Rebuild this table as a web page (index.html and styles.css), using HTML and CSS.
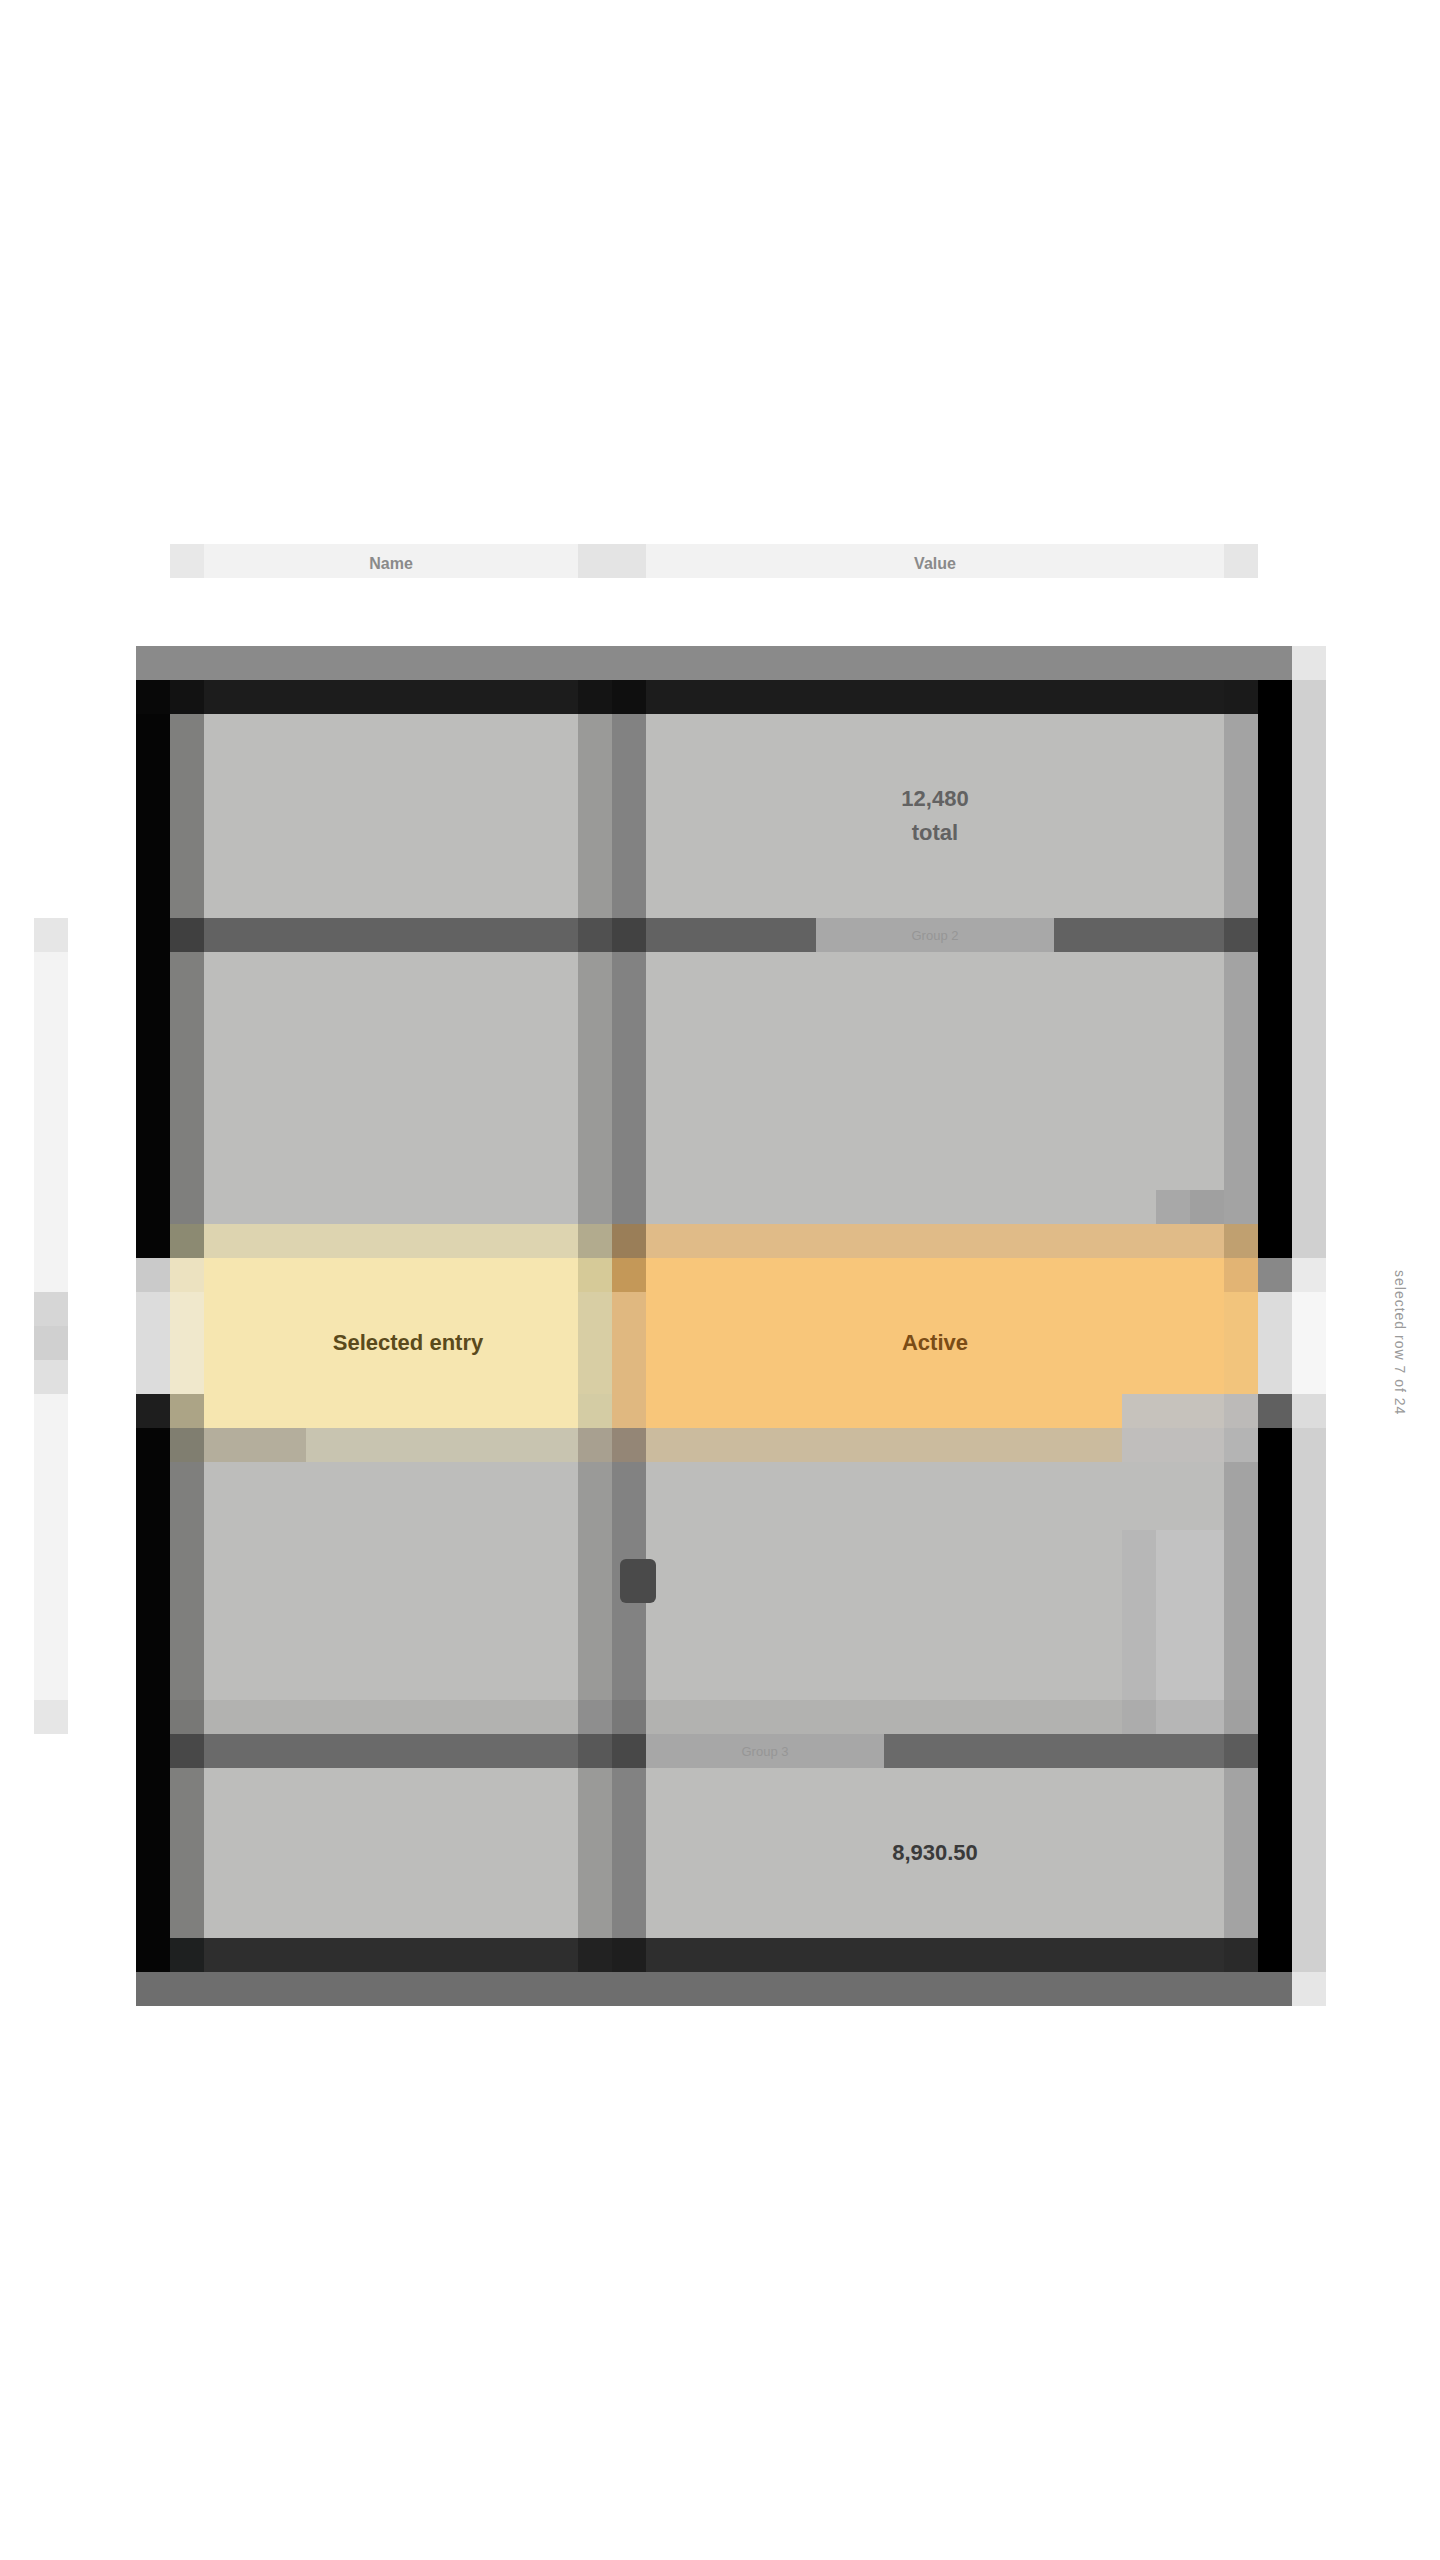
FILE: index.html
```html
<!DOCTYPE html>
<html lang="en">
<head>
<meta charset="utf-8">
<title>Records table</title>
<link rel="stylesheet" href="styles.css">
</head>
<body>
<main class="page">
  <div class="col-labels">
    <span class="cl-edge"></span>
    <span class="cl-label">Name</span>
    <span class="cl-sep"></span>
    <span class="cl-label">Value</span>
    <span class="cl-edge cl-edge-r"></span>
  </div>

  <div class="stage">
    <div class="rail"><div class="rail-thumb"></div></div>

    <section class="table">
      <div class="cap cap-top"></div>

      <div class="tr row-head"><div class="k"></div><div class="v"></div></div>

      <div class="tr row-a">
        <div class="k"></div>
        <div class="v"><span class="val-text val-a">12,480<br>total</span></div>
      </div>

      <div class="tr row-sep row-sep-1">
        <div class="k"></div>
        <div class="v"><span class="chip">Group 2</span></div>
      </div>

      <div class="tr row-b">
        <div class="k"></div>
        <div class="v v-corner"><span class="corner"></span></div>
      </div>

      <div class="tr row-glow-top"><div class="k"></div><div class="v"></div></div>
      <div class="tr row-sel-top"><div class="k"></div><div class="v"></div></div>
      <div class="tr row-sel">
        <div class="k"><span class="sel-key">Selected entry</span></div>
        <div class="v"><span class="sel-val">Active</span></div>
      </div>
      <div class="tr row-sel-bottom"><div class="k"></div><div class="v"></div></div>
      <div class="tr row-glow-bottom"><div class="k"></div><div class="v"></div></div>

      <div class="tr row-c">
        <div class="k"></div>
        <div class="v v-scroll"><span class="grip"></span><span class="track"></span></div>
      </div>
      <div class="tr row-c-foot"><div class="k"></div><div class="v"></div></div>

      <div class="tr row-sep row-sep-2">
        <div class="k"></div>
        <div class="v"><span class="chip chip-2">Group 3</span></div>
      </div>

      <div class="tr row-d">
        <div class="k"></div>
        <div class="v"><span class="val-text val-d">8,930.50</span></div>
      </div>

      <div class="tr row-foot"><div class="k"></div><div class="v"></div></div>

      <div class="cap cap-bottom"></div>
    </section>

    <div class="edge-shadow"></div>

    <aside class="side-note"><span class="side-text">selected row 7 of 24</span></aside>
  </div>
</main>
</body>
</html>
```

FILE: styles.css
```css
* {
  box-sizing: border-box;
  margin: 0;
  padding: 0;
}

html, body {
  background: #ffffff;
}

body {
  font-family: "Liberation Sans", Arial, sans-serif;
  color: #333;
}

.page {
  padding-top: 544px;
}

/* column labels strip */
.col-labels {
  display: grid;
  grid-template-columns: 34px 374px 68px 578px 34px;
  width: 1088px;
  height: 34px;
  margin-left: 170px;
  background: #f2f2f2;
}

.cl-edge { background: #e8e8e8; }
.cl-edge-r { background: #e6e6e6; }
.cl-sep { background: #e4e4e4; }

.cl-label {
  display: flex;
  align-items: center;
  justify-content: center;
  padding-top: 6px;
  font-size: 16px;
  font-weight: bold;
  color: #8a8a8a;
}

/* stage */
.stage {
  display: flex;
  align-items: flex-start;
  margin-top: 68px;
}

.rail {
  width: 34px;
  height: 816px;
  margin-left: 34px;
  margin-top: 272px;
  background: #f3f3f3;
  border-top: 34px solid #e6e6e6;
  border-bottom: 34px solid #e6e6e6;
}

.rail-thumb {
  height: 102px;
  margin-top: 340px;
  background: linear-gradient(to bottom, #d6d6d6 0 34px, #d0d0d0 34px 68px, #e0e0e0 68px 102px);
}

.table {
  width: 1156px;
  margin-left: 68px;
}

.cap {
  height: 34px;
}

.cap-top { background: #8a8a8a; }
.cap-bottom { background: #6e6e6e; }

/* generic row: outer frame borders + key cell + value cell */
.tr {
  --fl: #050505;
  --fr: #000000;
  --bl: #7f7f7d;
  --kb: #bdbdbb;
  --d1: #9a9a98;
  --d2: #828282;
  --vb: #bdbdbb;
  --br: #a3a3a3;
  display: flex;
  width: 1156px;
  height: 34px;
  border-left: 34px solid var(--fl);
  border-right: 34px solid var(--fr);
}

.tr .k {
  width: 442px;
  border-left: 34px solid var(--bl);
  border-right: 34px solid var(--d1);
  background: var(--kb);
  display: flex;
  align-items: center;
  justify-content: center;
}

.tr .v {
  width: 646px;
  border-left: 34px solid var(--d2);
  border-right: 34px solid var(--br);
  background: var(--vb);
  display: flex;
  align-items: center;
  justify-content: center;
  position: relative;
}

.row-head {
  --fl: #080808;
  --bl: #121212;
  --kb: #1c1c1c;
  --d1: #141414;
  --d2: #0f0f0f;
  --vb: #1c1c1c;
  --br: #1a1a1a;
}

.row-a { height: 204px; }
.row-b { height: 272px; }
.row-c { height: 238px; }
.row-d { height: 170px; }

.row-sep {
  --bl: #404040;
  --kb: #626262;
  --d1: #505050;
  --d2: #424242;
  --vb: #626262;
  --br: #4e4e4e;
}

.row-sep-2 {
  --bl: #484848;
  --kb: #6a6a6a;
  --d1: #585858;
  --d2: #484848;
  --vb: #6a6a6a;
  --br: #5c5c5c;
}

.tr.row-sep-2 .v { justify-content: flex-start; }

.chip {
  display: flex;
  align-items: center;
  justify-content: center;
  width: 238px;
  height: 34px;
  background: #a8a8a8;
  font-size: 13px;
  color: #969696;
}

.chip-2 { background: #a7a7a7; }

.val-text {
  text-align: center;
  font-weight: bold;
}

.val-a {
  font-size: 22px;
  line-height: 34px;
  color: #626262;
}

.val-d {
  font-size: 22px;
  line-height: 34px;
  color: #3a3a3a;
}

.tr .v-corner {
  justify-content: flex-end;
  align-items: flex-end;
}

.corner {
  width: 68px;
  height: 34px;
  background: linear-gradient(to right, #a8a8a8 50%, #a0a0a0 50%);
}

/* selected row and its glow */
.row-glow-top {
  --bl: #8c8a72;
  --kb: #ddd4b0;
  --d1: #b2ab8e;
  --d2: #9a7e58;
  --vb: #e0bb88;
  --br: #c0a070;
}

.row-sel-top {
  --fl: #cacaca;
  --fr: #888888;
  --bl: #ece2c0;
  --kb: #f6e6b0;
  --d1: #d6ca98;
  --d2: #c49858;
  --vb: #f8c67a;
  --br: #e2b474;
}

.row-sel {
  --fl: #dcdcdc;
  --fr: #dcdcdc;
  --bl: #f0e8cc;
  --kb: #f6e6b0;
  --d1: #d8cea4;
  --d2: #e0b880;
  --vb: #f8c67a;
  --br: #f2c47c;
  height: 102px;
}

.tr.row-sel .k { padding-left: 34px; }

.sel-key {
  font-size: 22px;
  font-weight: bold;
  color: #5a4a1c;
}

.sel-val {
  font-size: 22px;
  font-weight: bold;
  color: #7a4c16;
}

.row-sel-bottom {
  --fl: #1e1e1e;
  --fr: #606060;
  --bl: #aca486;
  --kb: #f6e6b0;
  --d1: #d4cca4;
  --d2: #e0b880;
  --vb: linear-gradient(to right, #f8c67a 476px, #c6c2bc 476px);
  --br: #bcbab8;
}

.row-glow-bottom {
  --bl: #807e70;
  --kb: linear-gradient(to right, #b4ae9c 102px, #c8c4b0 102px);
  --d1: #a8a090;
  --d2: #948676;
  --vb: linear-gradient(to right, #cbbb9e 476px, #c0bebc 476px);
  --br: #b4b4b4;
}

/* lower section */
.tr .v-scroll {
  justify-content: flex-end;
  align-items: flex-end;
}

.track {
  width: 102px;
  height: 170px;
  background: linear-gradient(to right, #b7b7b7 34px, #c2c2c2 34px);
}

.grip {
  position: absolute;
  left: -26px;
  top: 97px;
  width: 36px;
  height: 44px;
  border-radius: 6px;
  background: #4a4a4a;
}

.row-c-foot {
  --bl: #787876;
  --kb: #b2b2b0;
  --d1: #8e8e8e;
  --d2: #787878;
  --vb: linear-gradient(to right, #b2b2b0 476px, #acacac 476px 510px, #b6b6b6 510px);
  --br: #a0a0a0;
}

.row-foot {
  --bl: #1e2020;
  --kb: #2e2e2e;
  --d1: #222222;
  --d2: #1e1e1e;
  --vb: #2e2e2e;
  --br: #2a2a2a;
}

/* outer drop edge */
.edge-shadow {
  width: 34px;
  height: 1360px;
  background: linear-gradient(to bottom,
    #e6e6e6 0 34px,
    #d0d0d0 34px 612px,
    #eaeaea 612px 646px,
    #f6f6f6 646px 748px,
    #dcdcdc 748px 782px,
    #d0d0d0 782px 1326px,
    #e6e6e6 1326px 1360px);
}

.side-note {
  width: 80px;
  height: 238px;
  margin-left: 34px;
  margin-top: 578px;
  display: flex;
  justify-content: center;
  align-items: center;
}

.side-text {
  writing-mode: vertical-rl;
  font-size: 14px;
  letter-spacing: 1px;
  color: #9a9a9a;
}
```
